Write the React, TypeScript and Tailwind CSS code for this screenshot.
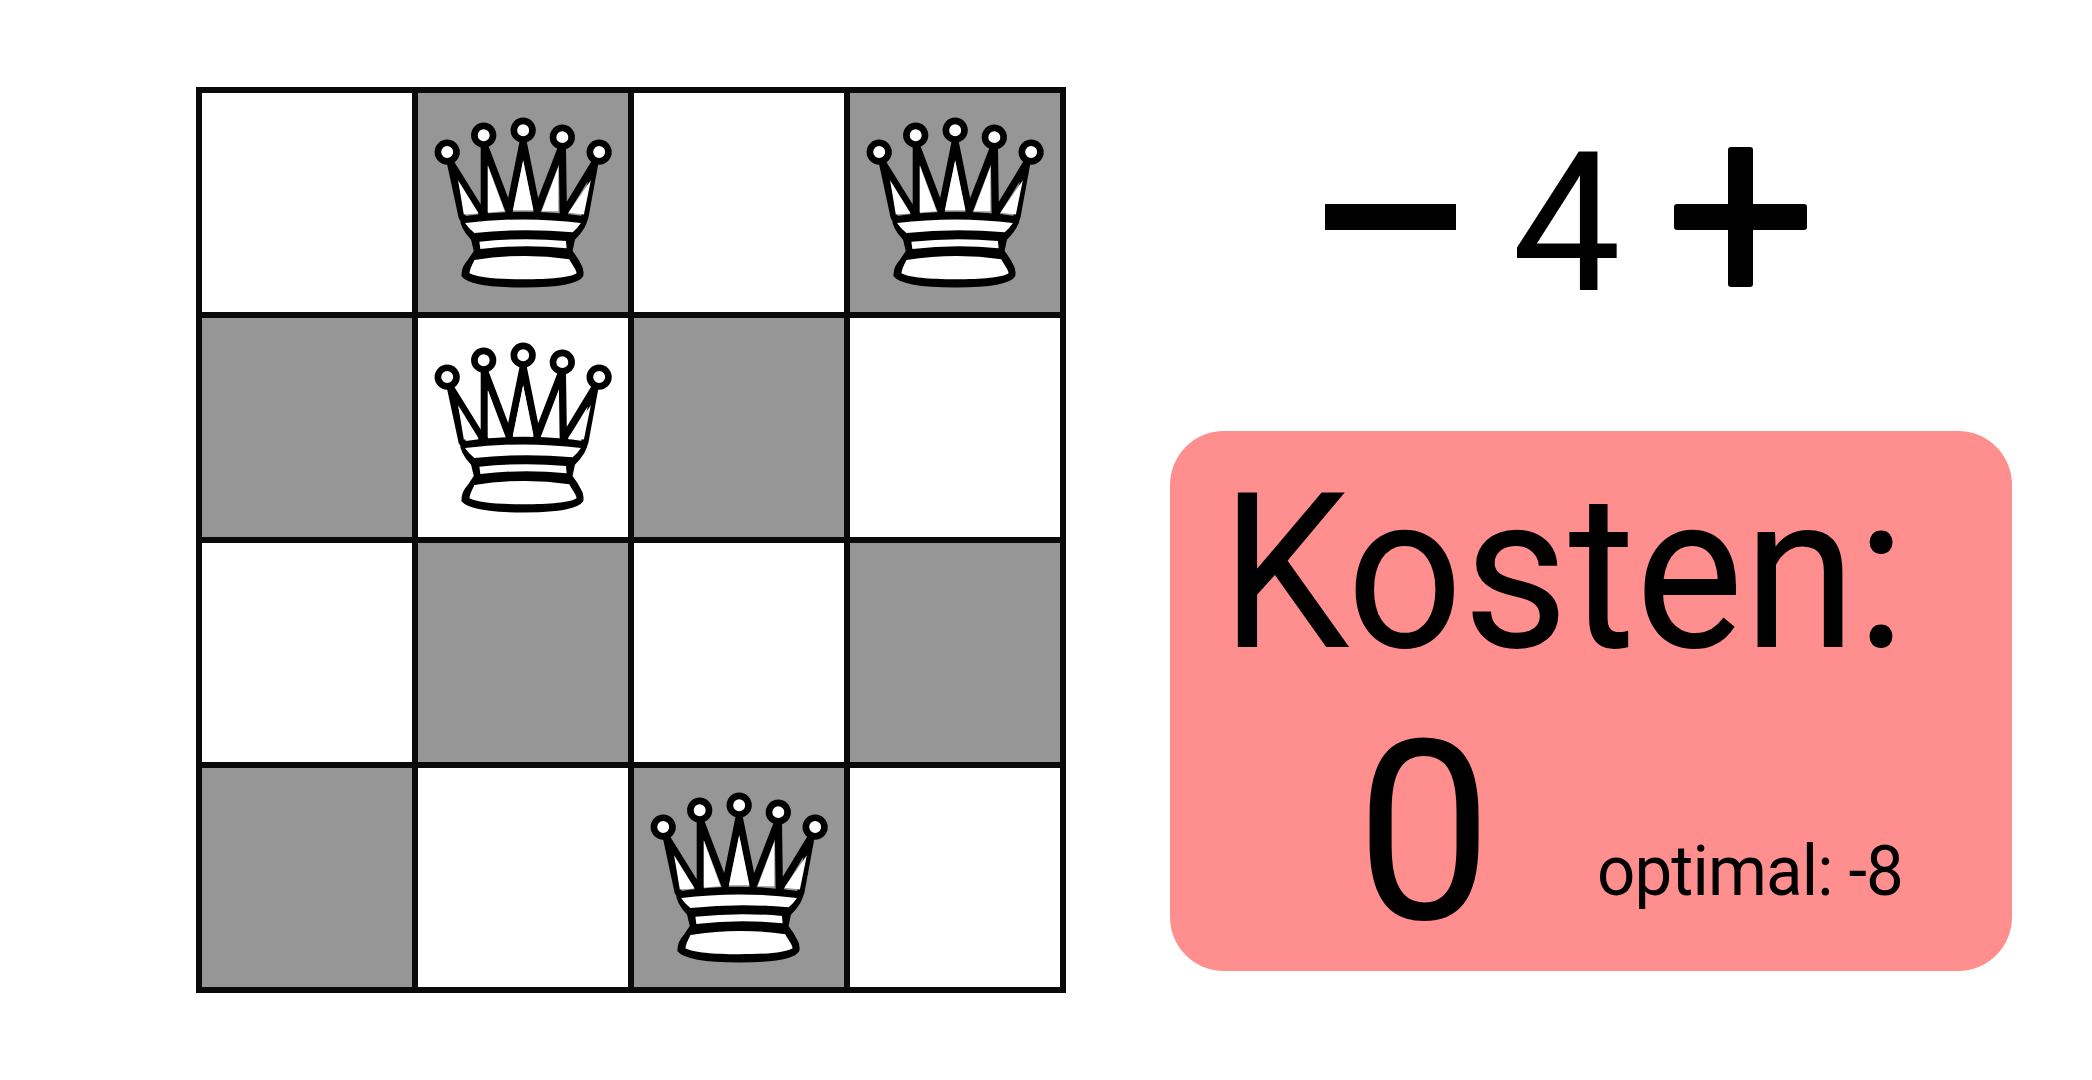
import React from "react";

function Queen() {
  return (
    <svg viewBox="22 22 633 660" className="block h-full w-full">
      <g stroke="#000" strokeWidth="22" strokeLinecap="round" fill="none">
        <path d="M120 232 L155 395 M120 232 L215 385 M222 180 L222 385 M222 180 L297 378 M339 170 L297 378 M339 170 L381 378 M457 180 L381 378 M457 180 L460 385 M555 232 L462 385 M555 232 L525 395" />
      </g>
      <path
        fill="#000"
        d="M148 395 Q340 365 535 395 Q532 428 495 464 L488 498 Q505 520 514 540 Q524 555 520 574 Q500 608 340 608 Q180 608 153 574 Q152 545 172 525 Q182 510 190 498 L182 464 Q148 430 148 395 Z"
      />
      <g fill="#fff">
        <path d="M143 285 L205 385 L160 388 Z" />
        <path d="M232 240 L283 378 L232 382 Z" />
        <path d="M339 225 L370 375 L308 375 Z" />
        <path d="M445 245 L445 378 L395 378 Z" />
        <path d="M543 285 L522 388 L475 383 Z" />
        <path d="M164 414 Q340 392 513 414 Q503 430 488 442 Q340 428 192 444 Q174 430 164 414 Z" />
        <path d="M207 470 Q340 456 468 468 L470 490 Q340 477 210 492 Z" />
        <path d="M192 525 Q340 502 478 523 C488 542 498 552 500 565 C480 578 420 583 340 583 C260 583 202 578 177 565 C180 547 187 537 192 525 Z" />
      </g>
      <g stroke="#000" strokeWidth="20" fill="#fff">
        <circle cx="110" cy="200" r="28" />
        <circle cx="220" cy="149" r="28" />
        <circle cx="339" cy="134" r="28" />
        <circle cx="457" cy="155" r="28" />
        <circle cx="568" cy="200" r="28" />
      </g>
    </svg>
  );
}

const cells = [
  [0, 1, 0, 1],
  [1, 0, 1, 0],
  [0, 1, 0, 1],
  [1, 0, 1, 0],
];
const queens = ["0-1", "0-3", "1-1", "3-2"];

export default function App() {
  return (
    <div className="flex h-[1080px] w-[2092px] overflow-hidden bg-white pl-[196px] pt-[87px] font-['Roboto',sans-serif] text-black">
      <div className="grid h-[906px] w-[870px] grid-cols-[repeat(4,210px)] grid-rows-[repeat(4,219px)] gap-[6px] bg-[#0a0a0a] p-[6px]">
        {cells.flatMap((row, r) =>
          row.map((dark, c) => (
            <div key={`${r}-${c}`} className={dark ? "bg-[#969696]" : "bg-white"}>
              {queens.includes(`${r}-${c}`) && <Queen />}
            </div>
          ))
        )}
      </div>
      <div className="ml-[104px] flex w-[842px] flex-col">
        <div className="ml-[155px] flex h-[344px] items-start pt-[60px]">
          <button className="mt-[57px] block h-[26px] w-[131px] bg-black" aria-label="minus" />
          <span className="-mt-[20px] ml-[56px] w-[110px] text-[194px] leading-[194px]">4</span>
          <button className="relative ml-[52px] block h-[140px] w-[133px]" aria-label="plus">
            <span className="absolute left-0 top-[57px] h-[26px] w-[133px] rounded-[3px] bg-black" />
            <span className="absolute left-[54px] top-0 h-[140px] w-[25px] rounded-[3px] bg-black" />
          </button>
        </div>
        <div className="flex h-[540px] w-[842px] flex-col rounded-[54px] bg-[#ff8f8f]">
          <div className="ml-[51px] mt-[27px] origin-left scale-x-[0.937] whitespace-nowrap text-[218px] leading-[230px]">Kosten:</div>
          <div className="mt-[11px] flex items-baseline">
            <span className="ml-[186px] inline-block origin-left scale-x-[0.97] text-[250px] leading-[270px]">0</span>
            <span className="relative -top-[24px] ml-[100px] inline-block origin-left scale-x-[0.96] whitespace-nowrap text-[70px] font-[450] leading-none tracking-[-0.9px]">optimal: -8</span>
          </div>
        </div>
      </div>
    </div>
  );
}
